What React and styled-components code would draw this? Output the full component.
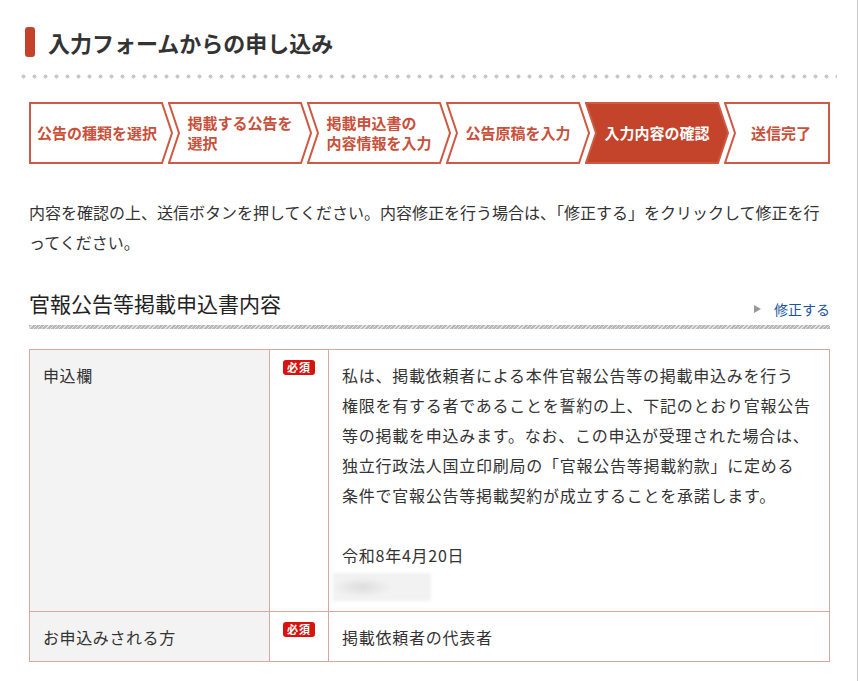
import React from 'react';
import styled, { createGlobalStyle } from 'styled-components';

const GlobalStyle = createGlobalStyle`
  html, body {
    margin: 0;
    padding: 0;
    background: #fff;
  }
  body {
    font-family: "Noto Sans CJK JP", "Noto Sans", sans-serif;
    color: #333;
  }
`;

const Page = styled.div`
  width: 858px;
  min-height: 681px;
  box-sizing: border-box;
  border-right: 1px solid #c9c9c9;
  padding-top: 27px;
`;

const PageTitle = styled.h1`
  display: flex;
  align-items: center;
  gap: 13px;
  margin: 0 0 0 25px;
  height: 30px;
  font-size: 22px;
  font-weight: 700;
  line-height: 30px;
  color: #333;

  &::before {
    content: '';
    flex: 0 0 10px;
    height: 30px;
    border-radius: 3px;
    background: #c4422a;
  }
`;

const Dotted = styled.div`
  margin: 17px 0 0 21px;
  width: 816px;
  height: 5px;
  background-image: radial-gradient(circle at 2.5px 2.5px, #c8c8c8 1.8px, transparent 2.3px);
  background-size: 11px 5px;
`;

const Steps = styled.ol`
  display: flex;
  list-style: none;
  margin: 23px 0 0 29px;
  padding: 0;
`;

const StepItem = styled.li`
  position: relative;
  box-sizing: border-box;
  flex: 0 0 ${p => p.$w}px;
  height: 62px;
  margin-left: -5px;
  display: flex;
  align-items: center;
  justify-content: center;
  padding: 0 ${p => (p.$last ? 2 : 10)}px 0 ${p => (p.$first ? 2 : 10)}px;
  font-size: 15px;
  font-weight: 700;
  line-height: 20px;
  color: ${p => (p.$active ? '#fff' : '#c9503a')};

  &:first-child {
    margin-left: 0;
  }

  svg {
    position: absolute;
    inset: 0;
  }
`;

const StepLabel = styled.span`
  position: relative;
  text-align: left;
`;

const Intro = styled.p`
  margin: 33px 0 0 29px;
  width: 802px;
  font-size: 16px;
  line-height: 30px;
  line-break: loose;
  color: #333;
`;

const SectionHead = styled.div`
  display: flex;
  justify-content: space-between;
  align-items: flex-end;
  margin: 34px 0 0 29px;
  width: 801px;
`;

const SectionTitle = styled.h2`
  margin: 0;
  font-size: 21px;
  font-weight: 400;
  line-height: 24px;
  color: #222;
`;

const EditLink = styled.a`
  display: flex;
  align-items: center;
  gap: 13px;
  margin-bottom: -3px;
  font-size: 14px;
  line-height: 18px;
  color: #1a56a0;
  text-decoration: none;
  cursor: pointer;

  &::before {
    content: '';
    border-style: solid;
    border-width: 4px 0 4px 7px;
    border-color: transparent transparent transparent #999;
  }
`;

const Stripe = styled.div`
  margin: 10px 0 0 29px;
  width: 801px;
  height: 4px;
  background: repeating-linear-gradient(135deg, #b9b9b9 0 2px, #e4e4e4 2px 3px);
`;

const Table = styled.div`
  margin: 20px 0 0 29px;
  width: 801px;
  box-sizing: border-box;
  border: 1px solid #d7a89d;
  border-bottom: none;
`;

const Row = styled.div`
  display: grid;
  grid-template-columns: 240px 59px 1fr;
  border-bottom: 1px solid #d7a89d;
`;

const LabelCell = styled.div`
  box-sizing: border-box;
  padding: 10px 13px ${p => p.$pb}px;
  background: #f3f3f3;
  border-right: 1px solid #d7a89d;
  font-size: 16px;
  line-height: 30px;
  letter-spacing: 0.6px;
  color: #333;
`;

const BadgeCell = styled.div`
  box-sizing: border-box;
  display: flex;
  justify-content: center;
  align-items: flex-start;
  padding-top: 10px;
  border-right: 1px solid #d7a89d;
`;

const Badge = styled.span`
  display: inline-block;
  width: 32px;
  height: 15px;
  border-radius: 3px;
  background: #d8120c;
  color: #fff;
  font-size: 11px;
  font-weight: 700;
  line-height: 15px;
  text-align: center;
  letter-spacing: 1px;
`;

const ValueCell = styled.div`
  padding: 10px 13px ${p => p.$pb}px;
  font-size: 16px;
  line-height: 30px;
  letter-spacing: 0.75px;
  color: #333;
`;

const Masked = styled.div`
  margin: 3px 0 0 -9px;
  width: 98px;
  height: 28px;
  background: radial-gradient(ellipse 30px 10px at 30% 50%, #dcdcdc, #ececec 70%, #f2f2f2);
  filter: blur(1.5px);
`;

const steps = [
  { label: ['公告の種類を選択'] },
  { label: ['掲載する公告を', '選択'] },
  { label: ['掲載申込書の', '内容情報を入力'] },
  { label: ['公告原稿を入力'] },
  { label: ['入力内容の確認'], active: true },
  { label: ['送信完了'] },
];

function chevron(w, h, first, last) {
  const m = h / 2;
  const pts = [[1, 1]];
  if (last) {
    pts.push([w - 1, 1], [w - 1, h - 1]);
  } else {
    pts.push([w - 11, 1], [w - 1, m], [w - 11, h - 1]);
  }
  pts.push([1, h - 1]);
  if (!first) pts.push([11, m]);
  return pts.map(p => p.join(',')).join(' ');
}

const Step = ({ label, active, first, last }) => {
  const w = last ? 106 : 144;
  return (
    <StepItem $w={w} $active={active} $first={first} $last={last}>
      <svg width={w} height="62" viewBox={`0 0 ${w} 62`}>
        <polygon
          points={chevron(w, 62, first, last)}
          fill={active ? '#c4432b' : '#fff'}
          stroke="#cd5a43"
          strokeWidth="2"
          strokeLinejoin="miter"
        />
      </svg>
      <StepLabel>
        {label.map((l, i) => (
          <React.Fragment key={i}>
            {i > 0 && <br />}
            {l}
          </React.Fragment>
        ))}
      </StepLabel>
    </StepItem>
  );
};

const pledge = [
  '私は、掲載依頼者による本件官報公告等の掲載申込みを行う',
  '権限を有する者であることを誓約の上、下記のとおり官報公告',
  '等の掲載を申込みます。なお、この申込が受理された場合は、',
  '独立行政法人国立印刷局の「官報公告等掲載約款」に定める',
  '条件で官報公告等掲載契約が成立することを承諾します。',
  '',
  '令和8年4月20日',
];

export default function App() {
  return (
    <>
      <GlobalStyle />
      <Page>
        <PageTitle>入力フォームからの申し込み</PageTitle>
        <Dotted />

        <Steps>
          {steps.map((s, i) => (
            <Step
              key={i}
              label={s.label}
              active={s.active}
              first={i === 0}
              last={i === steps.length - 1}
            />
          ))}
        </Steps>

        <Intro>
          内容を確認の上、送信ボタンを押してください。内容修正を行う場合は、「修正する」をクリックして修正を行ってください。
        </Intro>

        <SectionHead>
          <SectionTitle>官報公告等掲載申込書内容</SectionTitle>
          <EditLink>修正する</EditLink>
        </SectionHead>
        <Stripe />

        <Table>
          <Row>
            <LabelCell $pb={10}>申込欄</LabelCell>
            <BadgeCell>
              <Badge>必須</Badge>
            </BadgeCell>
            <ValueCell $pb={10}>
              {pledge.map((l, i) => (
                <React.Fragment key={i}>
                  {i > 0 && <br />}
                  {l}
                </React.Fragment>
              ))}
              <Masked />
            </ValueCell>
          </Row>
          <Row>
            <LabelCell $pb={9}>お申込みされる方</LabelCell>
            <BadgeCell>
              <Badge>必須</Badge>
            </BadgeCell>
            <ValueCell $pb={9}>掲載依頼者の代表者</ValueCell>
          </Row>
        </Table>
      </Page>
    </>
  );
}
